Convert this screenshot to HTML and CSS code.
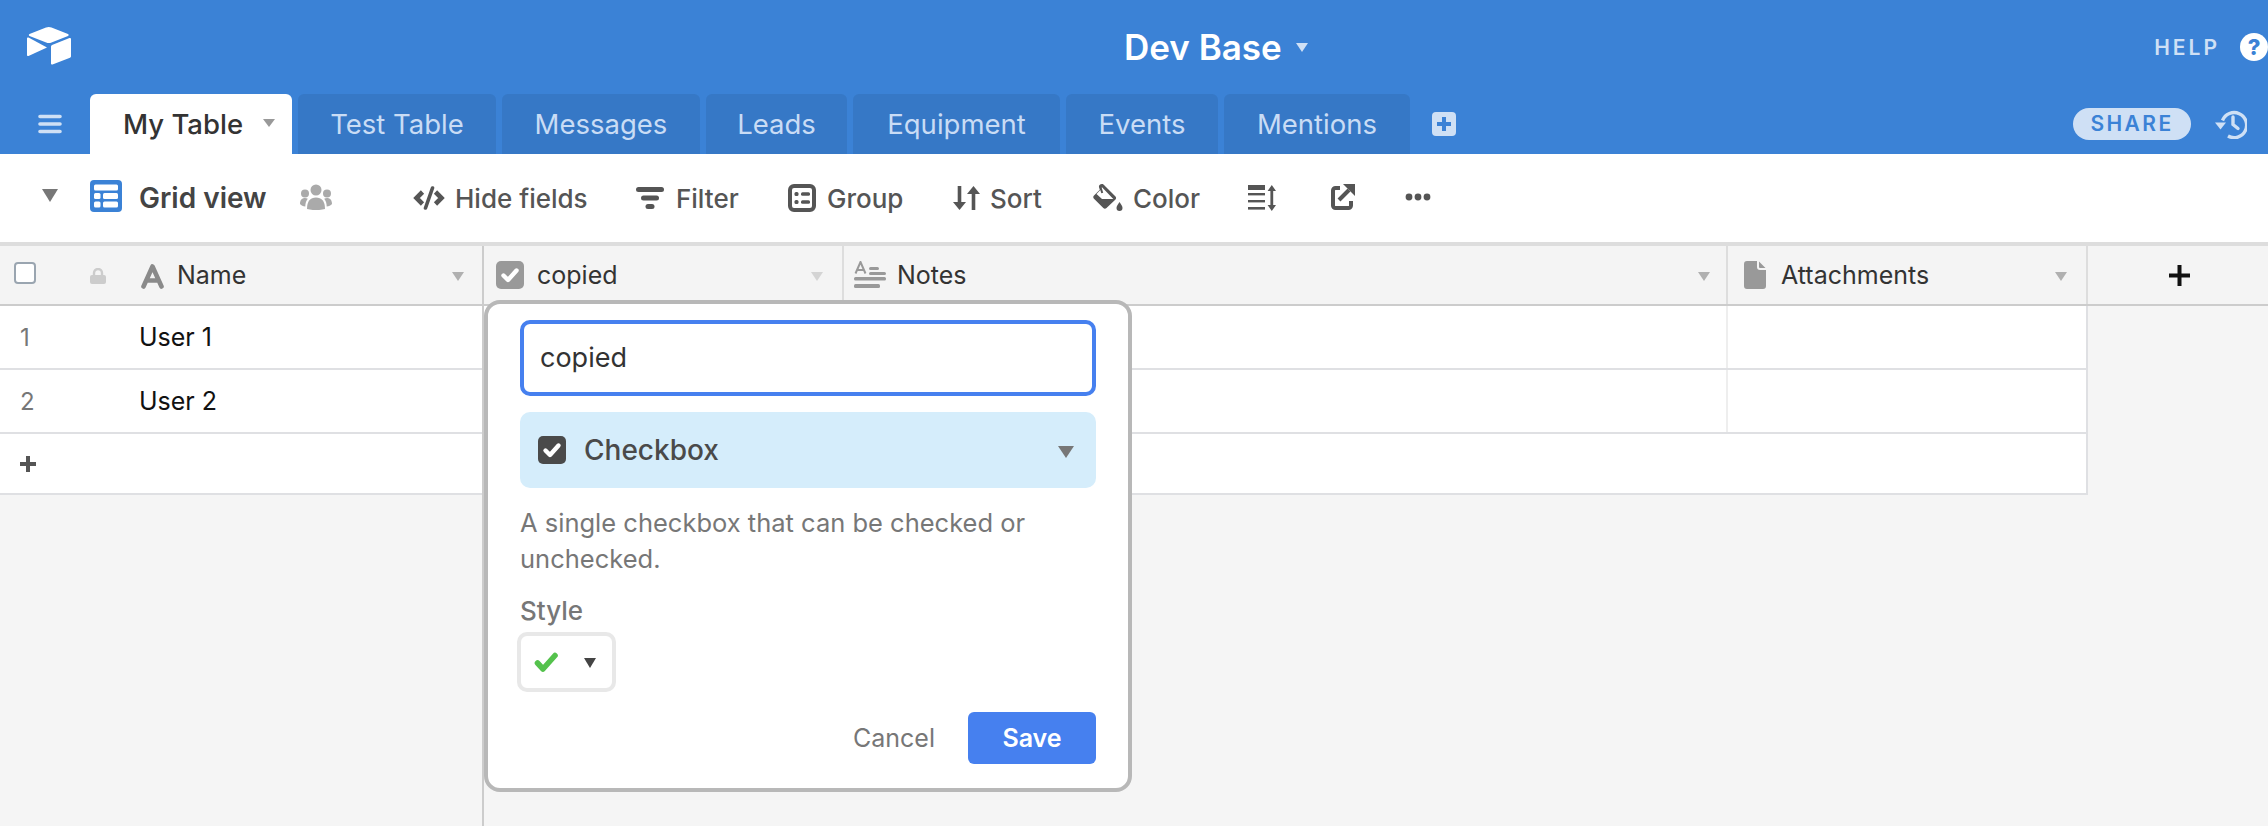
FILE: index.html
```html
<!DOCTYPE html>
<html lang="en">
<head>
<meta charset="utf-8">
<title>Dev Base</title>
<link rel="stylesheet" href="styles.css">
</head>
<body>
<header class="appbar">
  <div class="topbar">
    <div class="logo-cell">
      <svg class="logo" width="44" height="38" viewBox="0 0 44 38"><path fill="#fff" d="M19 .6 2.500 7.100c-.9.400-.9 1.500 0 1.900L19.200 15.500c1.700.7 3.600.7 5.300 0L41 9c.9-.4.9-1.500 0-1.900L24.500.6c-1.800-.7-3.700-.7-5.500 0Z"/><path fill="#fff" d="M24 19.500V36.500c0 .8.800 1.300 1.500 1L43 30.700c.6-.2 1-.8 1-1.400V12c0-.8-.8-1.300-1.500-1L25 17.900c-.6.300-1 .9-1 1.600Z"/><path fill="#fff" d="M0 11.500V28c0 .8.800 1.300 1.500 1L20 20.500 1.500 10.600C.8 10.300 0 10.700 0 11.500Z"/></svg>
    </div>
    <div class="base-title"><span>Dev Base</span><i class="caret caret-title"></i></div>
    <div class="help-cell">
      <span class="help-label">HELP</span>
      <span class="help-icon">?</span>
    </div>
  </div>
  <div class="tabbar">
    <svg class="menu-icon" width="24" height="20" viewBox="0 0 24 20"><path stroke="#cfe0f5" stroke-width="3.600" stroke-linecap="round" d="M2 2.500h20M2 10h20M2 17.500h20"/></svg>
    <nav class="tabs">
      <div class="tab tab-active">My Table<i class="caret caret-tab"></i></div>
      <div class="tab tab-test">Test Table</div>
      <div class="tab tab-messages">Messages</div>
      <div class="tab tab-leads">Leads</div>
      <div class="tab tab-equipment">Equipment</div>
      <div class="tab tab-events">Events</div>
      <div class="tab tab-mentions">Mentions</div>
    </nav>
    <svg class="add-table" width="24" height="24" viewBox="0 0 24 24"><rect width="24" height="24" rx="4" fill="#cfe0f5"/><path stroke="#3b82d6" stroke-width="4" d="M12 5v14M5 12h14"/></svg>
    <div class="share-cell">
      <span class="share">SHARE</span>
      <svg class="history" width="32" height="30" viewBox="0 0 32 30"><path fill="none" stroke="#cfe0f5" stroke-width="3.400" d="M7.500 11.500A12.500 12.500 0 1 1 13 27"/><path fill="#cfe0f5" d="M0 13.500h11L5.500 20.500Z"/><path fill="none" stroke="#cfe0f5" stroke-width="3.400" stroke-linecap="round" d="M18 8v7.500l5 4"/></svg>
    </div>
  </div>
</header>

<section class="toolbar">
  <i class="caret caret-view"></i>
  <svg class="grid-icon" width="32" height="32" viewBox="0 0 32 32"><rect width="32" height="32" rx="4" fill="#3b82d6"/><g fill="#fff"><rect x="4" y="4.500" width="24" height="6" rx="1.500"/><rect x="4" y="13" width="6.500" height="6" rx="1.500"/><rect x="13" y="13" width="15" height="6" rx="1.500"/><rect x="4" y="21.500" width="6.500" height="6" rx="1.500"/><rect x="13" y="21.500" width="15" height="6" rx="1.500"/></g></svg>
  <span class="view-name">Grid view</span>
  <svg class="people" width="32" height="26" viewBox="0 0 32 26"><g fill="#aaa"><circle cx="16" cy="6" r="5.500"/><circle cx="5" cy="9.500" r="4"/><circle cx="27" cy="9.500" r="4"/><path d="M7 25c0-8 3.500-11.500 9-11.500S25 17 25 25c-5 1.500-13 1.500-18 0Z"/><path d="M0 20c0-4 2-6 5-6 1 0 2 .3 2.800.8C6 17 5.400 19.500 5.300 22.500 3 22.300 1.300 21.500 0 20Z"/><path d="M32 20c0-4-2-6-5-6-1 0-2 .3-2.800.8 1.800 2.200 2.400 4.700 2.500 7.700 2.300-.2 4-1 5.300-2.500Z"/></g></svg>
  <div class="tool tool-hide">
    <svg width="32" height="24" viewBox="0 0 32 24"><g fill="none" stroke="#555" stroke-width="4.600"><path d="M9.500 6 3.500 12l6 6"/><path d="M22.500 6l6 6-6 6"/><path d="M19.500 2 12.500 22" stroke-width="3.600" stroke-linecap="round"/></g></svg>
    <span>Hide fields</span>
  </div>
  <div class="tool tool-filter">
    <svg width="28" height="22" viewBox="0 0 28 22"><g fill="#555"><rect width="28" height="5" rx="2.500"/><rect x="5" y="8.500" width="18" height="5" rx="2.500"/><rect x="9.500" y="17" width="9" height="5" rx="2.500"/></g></svg>
    <span>Filter</span>
  </div>
  <div class="tool tool-group">
    <svg width="28" height="28" viewBox="0 0 28 28"><rect x="2" y="2" width="24" height="24" rx="4" fill="none" stroke="#555" stroke-width="4"/><g fill="#555"><rect x="6.500" y="8" width="4" height="4" rx="1.500"/><rect x="13" y="8.300" width="9" height="3.400" rx="1.500"/><rect x="6.500" y="16" width="4" height="4" rx="1.500"/><rect x="13" y="16.300" width="9" height="3.400" rx="1.500"/></g></svg>
    <span>Group</span>
  </div>
  <div class="tool tool-sort">
    <svg width="27" height="24" viewBox="0 0 27 24"><g fill="#555"><path d="M4.700 0h3.600v16H13L6.500 24 0 16h4.700Z"/><path d="M18.700 24h3.600V8H27L20.500 0 14 8h4.700Z"/></g></svg>
    <span>Sort</span>
  </div>
  <div class="tool tool-color">
    <svg width="30" height="28" viewBox="0 0 30 28"><path fill="#555" d="M9 0c1 0 1.600.6 2 1.100l11.500 11.500c.8.800.8 2 0 2.800L13.500 24c-1 .9-2.300.9-3.200 0L1 14.800c-1-1-1-2.400 0-3.300l5.800-5.700L6 3.200C5.500 1.500 7 0 9 0Zm0 3.300-.3.400 1.500 5-1.900.6-1-3.300-3.800 4L9 15h11.300L9 3.300ZM26.500 18c2 2.800 3 4.500 3 6a3 3 0 0 1-6 0c0-1.500 1-3.200 3-6Z"/></svg>
    <span>Color</span>
  </div>
  <svg class="tool-height" width="28" height="26" viewBox="0 0 28 26"><g fill="#555"><rect width="17" height="5"/><rect y="8" width="17" height="2.400"/><rect y="15" width="17" height="2.400"/><rect y="22" width="17" height="2.600"/><path d="M23.800 0 28 6h-2.800v14H28l-4.200 6-4.200-6h2.800V6h-2.800Z"/></g></svg>
  <svg class="tool-expand" width="24" height="26" viewBox="0 0 24 26"><g fill="none" stroke="#555" stroke-width="4"><path d="M9 4H4.500A2.500 2.500 0 0 0 2 6.500v15A2.500 2.500 0 0 0 4.500 24h13a2.500 2.500 0 0 0 2.500-2.500V17"/><path d="M8 16 18 6"/></g><path fill="#555" d="M12 0h12v12Z"/></svg>
  <svg class="tool-more" width="26" height="8" viewBox="0 0 26 8"><g fill="#555"><circle cx="4" cy="4" r="3.400"/><circle cx="13" cy="4" r="3.400"/><circle cx="22" cy="4" r="3.400"/></g></svg>
</section>

<main class="sheet">
  <div class="pane-left">
    <div class="row-head head-left">
      <span class="head-check"></span>
      <svg class="head-lock" width="16" height="16" viewBox="0 0 16 16"><path fill="none" stroke="#ccc" stroke-width="2.400" d="M4 8V5a4 4 0 0 1 8 0v3"/><rect y="7" width="16" height="9" rx="2" fill="#ccc"/></svg>
      <svg class="head-a" width="23" height="25" viewBox="0 0 23 25"><path fill="none" stroke="#8a8a8a" stroke-width="4.600" stroke-linecap="round" stroke-linejoin="round" d="M2.500 22.500 11.500 2.500 20.500 22.500M5.500 16.500h12"/></svg>
      <span class="head-name">Name</span>
      <i class="caret caret-col"></i>
    </div>
    <div class="row row-left"><span class="num">1</span><span class="cell-name">User 1</span></div>
    <div class="row row-left"><span class="num">2</span><span class="cell-name">User 2</span></div>
    <div class="row row-left row-add">
      <svg width="16" height="16" viewBox="0 0 16 16"><path stroke="#555" stroke-width="4" d="M8 0v16M0 8h16"/></svg>
    </div>
  </div>
  <div class="pane-right">
    <div class="row-head head-right">
      <div class="col-head col-copied">
        <svg width="28" height="28" viewBox="0 0 28 28"><rect width="28" height="28" rx="5" fill="#999"/><path fill="none" stroke="#fff" stroke-width="4.400" stroke-linecap="round" stroke-linejoin="round" d="M7.500 14.500l4.500 4.500 8.500-9.500"/></svg>
        <span>copied</span><i class="caret caret-col caret-light"></i>
      </div>
      <div class="col-head col-notes">
        <svg width="32" height="28" viewBox="0 0 32 28"><path fill="none" stroke="#999" stroke-width="2" d="M1.500 12.500 6.500 1l5 11.500M3 9h7"/><g fill="#999"><rect x="15" y="6" width="10" height="3" rx="1.500"/><rect x="15" y="11" width="17" height="3" rx="1.500"/><rect y="16" width="32" height="3.500" rx="1.500"/><rect y="23" width="26" height="4" rx="1.500"/></g></svg>
        <span>Notes</span><i class="caret caret-col"></i>
      </div>
      <div class="col-head col-attach">
        <svg width="22" height="28" viewBox="0 0 22 28"><path fill="#999" d="M3 0h10v6a3 3 0 0 0 3 3h6v16a3 3 0 0 1-3 3H3a3 3 0 0 1-3-3V3a3 3 0 0 1 3-3Zm12 .5L21.500 7H16a1 1 0 0 1-1-1Z"/></svg>
        <span>Attachments</span><i class="caret caret-col"></i>
      </div>
      <div class="col-add">
        <svg width="21" height="21" viewBox="0 0 21 21"><path stroke="#111" stroke-width="4" d="M10.500 0v21M0 10.500h21"/></svg>
      </div>
    </div>
    <div class="row row-right"><span class="cell cell-copied"></span><span class="cell cell-notes"></span></div>
    <div class="row row-right"><span class="cell cell-copied"></span><span class="cell cell-notes"></span></div>
    <div class="row row-right row-add"></div>
  </div>

  <div class="popup">
    <div class="field-name">copied</div>
    <div class="field-type">
      <svg width="28" height="28" viewBox="0 0 28 28"><rect width="28" height="28" rx="5" fill="#4a4a4a"/><path fill="none" stroke="#fff" stroke-width="4.400" stroke-linecap="round" stroke-linejoin="round" d="M7.500 14.500l4.500 4.500 8.500-9.500"/></svg>
      <span>Checkbox</span>
      <i class="caret caret-type"></i>
    </div>
    <p class="type-desc">A single checkbox that can be checked or unchecked.</p>
    <div class="style-label">Style</div>
    <div class="style-select">
      <svg width="24" height="20" viewBox="0 0 24 20"><path fill="none" stroke="#54c24c" stroke-width="5.600" stroke-linecap="round" stroke-linejoin="round" d="M3.500 11l5.500 6L21 3.500"/></svg>
      <i class="caret caret-style"></i>
    </div>
    <div class="popup-actions">
      <span class="cancel">Cancel</span>
      <span class="save">Save</span>
    </div>
  </div>
</main>
</body>
</html>
```

FILE: styles.css
```css
* { box-sizing: border-box; }
html, body { margin: 0; height: 100%; }
body {
  width: 2268px;
  height: 826px;
  overflow: hidden;
  background: #f5f5f5;
  font-family: Inter, "Liberation Sans", sans-serif;
  color: #333;
  display: flex;
  flex-direction: column;
}
svg { display: block; flex: none; }
.caret {
  display: block;
  flex: none;
  width: 0;
  height: 0;
  border-style: solid;
  border-color: transparent;
}

/* app bar */
.appbar { background: #3b82d6; height: 154px; flex: none; }
.topbar {
  height: 94px;
  display: grid;
  grid-template-columns: 1124px auto 1fr;
  align-items: center;
}
.logo-cell { padding-left: 27px; padding-bottom: 2px; }
.base-title {
  display: flex;
  align-items: center;
  gap: 14px;
  color: #fff;
  font-size: 35px;
  font-weight: 600;
}
.caret-title { border-width: 9px 6.500px 0; border-top-color: #cfe0f5; }
.help-cell {
  display: flex;
  justify-content: flex-end;
  align-items: center;
  gap: 20px;
}
.help-label { color: #cfe0f5; font-size: 21px; font-weight: 600; letter-spacing: 3px; }
.help-icon {
  width: 28px;
  height: 28px;
  border-radius: 50%;
  background: #fff;
  color: #3b82d6;
  font-size: 22px;
  font-weight: 800;
  line-height: 28px;
  text-align: center;
}
.tabbar { height: 60px; display: flex; }
.menu-icon { margin: 20px 28px 0 38px; }
.tabs { display: flex; gap: 6px; }
.tab {
  height: 60px;
  width: 198px;
  border-radius: 6px 6px 0 0;
  background: #3678c6;
  color: #c9dcf5;
  font-size: 27.500px;
  line-height: 60px;
  text-align: center;
}
.tab-active {
  width: 202px;
  background: #fff;
  color: #333;
  display: flex;
  align-items: center;
  padding-left: 33px;
  gap: 20px;
  font-weight: 500;
}
.tab-leads { width: 141px; }
.tab-equipment { width: 207px; }
.tab-events { width: 152px; }
.tab-mentions { width: 186px; }
.caret-tab { border-width: 8px 6.500px 0; border-top-color: #999; margin-top: -2px; }
.add-table { margin: 18px 0 0 22px; }
.share-cell {
  margin-left: auto;
  display: flex;
  gap: 24px;
  padding: 14px 21px 0 0;
}
.share {
  width: 118px;
  height: 32px;
  border-radius: 16px;
  background: #cfe0f5;
  color: #3b82d6;
  font-size: 21px;
  font-weight: 600;
  letter-spacing: 2.400px;
  line-height: 32px;
  text-align: center;
}
.history { margin-top: 1px; }

/* toolbar */
.toolbar {
  height: 92px;
  flex: none;
  background: #fff;
  border-bottom: 4px solid #ddd;
  display: flex;
  align-items: center;
  padding-left: 42px;
  color: #555;
  font-size: 26px;
}
.caret-view { border-width: 13px 8px 0; border-top-color: #777; margin-right: 32px; margin-top: -5px; }
.grid-icon { margin-right: 17px; margin-top: -4px; }
.view-name { width: 161px; font-size: 28px; font-weight: 600; color: #444; }
.people { margin-top: -2px; }
.tool { display: flex; align-items: center; gap: 10px; font-weight: 500; }
.tool-hide { margin-left: 81px; width: 223px; }
.tool-filter { width: 152px; gap: 12px; }
.tool-group { width: 165px; gap: 11px; }
.tool-sort { width: 140px; gap: 10px; }
.tool-color { width: 155px; }
.tool-height { margin-right: 55px; }
.tool-expand { margin-right: 50px; margin-top: -2px; }
.tool-more { margin-top: -2px; }

/* sheet */
.sheet { position: relative; flex: 1; display: flex; min-height: 0; }
.pane-left { width: 484px; flex: none; border-right: 2px solid #ccc; }
.pane-right { flex: 1; min-width: 0; }
.row-head {
  height: 60px;
  border-bottom: 2px solid #ccc;
  background: #f4f4f4;
  display: flex;
  align-items: center;
  font-size: 25px;
  color: #333;
}
.head-check {
  width: 22px;
  height: 22px;
  margin-left: 14px;
  border: 2px solid #9aa5b0;
  border-radius: 4px;
  background: #fff;
  margin-top: -4px;
}
.head-lock { margin-left: 54px; margin-top: 2px; }
.head-a { margin-left: 35px; margin-top: 2px; }
.head-name { margin-left: 13px; width: 275px; }
.caret-col { border-width: 9px 6.500px 0; border-top-color: #b0b0b0; margin-top: 3px; }
.caret-light { border-top-color: #d4d4d4; }
.row {
  height: 64px;
  background: #fff;
  border-bottom: 2px solid #dfe0e3;
  display: flex;
  align-items: center;
  font-size: 25px;
}
.row-left { color: #111; }
.num { width: 139px; padding-left: 20px; color: #777; font-size: 24px; }
.cell-name { margin-top: -1px; }
.row-add { height: 61px; padding-left: 20px; }
.head-right { padding: 0; }
.col-head {
  height: 58px;
  border-right: 2px solid #ddd;
  display: flex;
  align-items: center;
  gap: 13px;
}
.col-copied { width: 360px; padding-left: 12px; }
.col-copied span { width: 261px; }
.col-notes { width: 884px; padding-left: 10px; gap: 11px; }
.col-notes span { width: 790px; }
.col-attach { width: 360px; padding-left: 16px; gap: 15px; }
.col-attach span { width: 259px; }
.col-add { flex: 1; display: flex; justify-content: center; padding-left: 2px; }
.row-right { width: 1604px; border-right: 2px solid #dfe0e3; }
.cell { height: 100%; border-right: 2px solid #eee; }
.cell-copied { width: 360px; }
.cell-notes { width: 884px; }

/* field popup */
.popup {
  position: absolute;
  left: 484px;
  top: 54px;
  width: 648px;
  height: 492px;
  padding: 16px 32px 0;
  background: #fff;
  border: 4px solid #b8b8b8;
  border-radius: 16px;
  font-size: 24px;
}
.field-name {
  height: 76px;
  border: 4px solid #4680ef;
  border-radius: 10px;
  padding-left: 16px;
  color: #333;
  font-size: 27px;
  line-height: 68px;
}
.field-type {
  height: 76px;
  margin-top: 16px;
  border-radius: 10px;
  background: #d5edfb;
  display: flex;
  align-items: center;
  padding: 0 22px 0 18px;
  gap: 18px;
  color: #4a4a4a;
  font-size: 28px;
  font-weight: 500;
}
.field-type span { flex: 1; }
.caret-type { border-width: 12px 8px 0; border-top-color: #777; margin-top: 4px; }
.type-desc {
  margin: 17px 0 0;
  color: #777;
  font-size: 25.500px;
  line-height: 36px;
}
.style-label { margin-top: 16px; color: #777; font-size: 26px; font-weight: 500; line-height: 36px; }
.style-select {
  width: 99px;
  height: 60px;
  margin: 3px 0 0 -3px;
  border: 4px solid #e8e8e8;
  border-radius: 10px;
  display: flex;
  align-items: center;
  padding-left: 13px;
  gap: 26px;
}
.caret-style { border-width: 10px 6px 0; border-top-color: #444; margin-top: 2px; }
.popup-actions {
  margin-top: 20px;
  display: flex;
  justify-content: flex-end;
  align-items: center;
  gap: 33px;
}
.cancel { color: #777; font-size: 25px; }
.save {
  width: 128px;
  height: 52px;
  border-radius: 6px;
  background: #4680ef;
  color: #fff;
  font-size: 25px;
  font-weight: 600;
  line-height: 52px;
  text-align: center;
}
```
